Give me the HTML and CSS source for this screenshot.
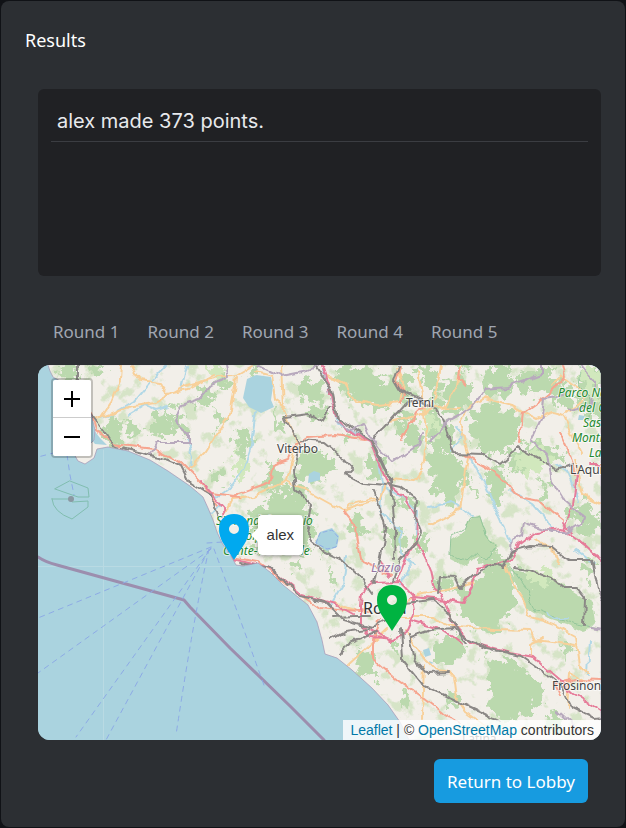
FILE: index.html
```html
<!DOCTYPE html>
<html lang="en">
<head>
<meta charset="utf-8">
<meta name="viewport" content="width=device-width, initial-scale=1">
<title>Results</title>
<link rel="stylesheet" href="styles.css">
</head>
<body>
<main class="card">
  <h1 class="title">Results</h1>
  <section class="content">
    <ul class="scores"><li class="score">alex made 373 points.</li></ul>
    <nav class="rounds" aria-label="Rounds">
      <a href="#round-1">Round 1</a><a href="#round-2">Round 2</a><a href="#round-3">Round 3</a><a href="#round-4">Round 4</a><a href="#round-5">Round 5</a>
    </nav>
    <div class="map">
      <svg class="tiles" viewBox="38 365 563 375" preserveAspectRatio="xMidYMid slice" aria-hidden="true">
        <defs>
          <filter id="rough" x="-5%" y="-5%" width="110%" height="110%" color-interpolation-filters="sRGB">
            <feTurbulence type="fractalNoise" baseFrequency="0.11" numOctaves="4" seed="4"/>
            <feDisplacementMap in="SourceGraphic" scale="26" xChannelSelector="R" yChannelSelector="G"/>
            <feGaussianBlur stdDeviation="0.5"/>
          </filter>
          <filter id="wobble" x="-5%" y="-5%" width="110%" height="110%" color-interpolation-filters="sRGB">
            <feTurbulence type="fractalNoise" baseFrequency="0.08" numOctaves="2" seed="9"/>
            <feDisplacementMap in="SourceGraphic" scale="8" xChannelSelector="R" yChannelSelector="G"/>
            <feGaussianBlur stdDeviation="0.3"/>
          </filter>
          <filter id="speckle" x="0" y="0" width="100%" height="100%" color-interpolation-filters="sRGB">
            <feTurbulence type="fractalNoise" baseFrequency="0.06" numOctaves="5" seed="12"/>
            <feColorMatrix values="0 0 0 0 .78  0 0 0 0 .87  0 0 0 0 .71  0 8 0 0 -4.5"/>
          </filter>
          <path id="land" d="M48 365L50 371 53 377 62 382 84 400 91 414 95 430 94 440 86 448 74 454 78 461 85 464 94 458 97 449 108 447 128 451 150 460 168 471 190 486 203 497 208 508 213 520 217 532 222 543 231 556 236 565 243 566 258 563 270 572 283 585 298 597 308 605 317 622 322 640 325 654 337 658 352 670 372 688 388 705 400 722 409 740H601V365Z"/>
          <clipPath id="on-land"><use href="#land"/></clipPath>
        </defs>
        <path class="sea" d="M38 365H601V740H38Z"/>
        <path class="tile-edge" d="M103.500 450V740M38 566.500H240"/>
        <use href="#land" class="land"/>
        <g clip-path="url(#on-land)">
          <rect x="38" y="365" width="563" height="375" filter="url(#speckle)" opacity=".65"/>
          <g class="wood" filter="url(#rough)">
            <path d="M53 370L76 368 82 378 60 382ZM91 366L104 367 103 375 92 374ZM103 422L120 419 124 435 120 447 104 440ZM127 423L144 426 141 437 128 436ZM151 416L165 411 174 428 169 439 151 434ZM166 408L184 412 189 437 175 430ZM197 389L208 386 216 392 210 405 197 406ZM215 377L226 374 231 386 218 391ZM214 470L223 469 224 480 216 483Z"/>
            <path d="M295 386L312 380 326 389 318 402 300 399ZM303 412L322 405 335 413 317 420ZM335 367L365 366 384 381 410 377 413 396 389 408 355 405 344 390ZM416 366L432 365 433 390 421 381ZM397 415L417 420 422 448 411 452 397 431ZM303 453L321 445 335 464 331 480 305 481 295 466ZM365 458L382 458 389 472 372 479ZM240 430L253 440 244 457 235 454ZM271 462L285 476 276 491 260 485ZM245 365L260 366 252 382Z"/>
            <path d="M431 372L439 366 440 409 431 420ZM444 386L464 374 472 386 467 409 446 411ZM485 366L515 366 510 392 487 398ZM472 411L491 402 521 416 518 437 501 453 487 455 466 433ZM430 409L451 425 452 453 429 453ZM431 452L462 456 465 483 453 508 430 489ZM486 466L502 469 508 491 493 505ZM508 449L529 452 528 474 509 473ZM514 378L532 368 550 369 549 389 530 399ZM548 379L563 377 565 397 549 405ZM525 440L556 450 569 460 550 460 529 451ZM580 366L603 366 603 421 587 421 579 398ZM556 390L572 382 574 414 561 403ZM571 507L585 501 602 521 594 538 572 524Z"/>
            <path d="M249 516L275 499 306 507 318 530 303 555 278 542 254 554ZM286 562L299 557 298 573ZM265 499L273 491 310 488 301 507ZM317 540L329 544 327 561ZM386 532L400 526 407 546 396 549ZM393 497L417 499 413 515ZM359 650L377 657 377 681 358 674ZM433 637L452 636 467 649 453 665 434 664ZM477 580L499 559 516 563 517 592 505 624 491 633 461 618 455 590ZM483 656L506 660 534 676 545 686 539 704 512 724 490 713 491 688ZM474 561L500 553 497 572ZM551 710L561 722 560 735 545 728ZM427 583L447 573 454 589 437 591ZM390 635L400 646 395 657Z"/>
            <path d="M355 510L366 520 362 535 350 528ZM418 530L430 540 425 556 415 548ZM455 360L470 362 460 374ZM470 480L480 490 474 500ZM540 480L552 490 545 500ZM580 560L596 566 590 585ZM215 410L226 418 218 430ZM330 570L340 578 332 592ZM560 640L575 648 565 656ZM400 690L412 700 404 712ZM446 690L458 700 450 712ZM275 410L285 425 277 436ZM340 430L352 436 345 446Z"/>
          </g>
          <g class="wood" filter="url(#wobble)">
            <path d="M479 515L485 533 496 547 486 559 477 556 466 566 450 558 451 540 465 531 468 520ZM513 570L524 572 552 577 592 603 595 621 585 632 565 624 543 617 527 608 518 590Z"/>
          </g>
          <g class="wood pale" filter="url(#rough)">
            <path d="M579 365H600V407L587 395ZM512 458L541 445 552 461 526 480ZM521 569L545 570 560 580 540 586ZM205 365L226 366 223 382 209 378ZM235 450L248 464 241 482ZM425 400L440 430 425 440Z"/>
          </g>
          <g class="park-line" filter="url(#wobble)">
            <path d="M479 517L485 535 494 547 486 559 477 552 466 562 450 553 451 536 465 529 470 518ZM512 568L524 585 536 610 568 622 597 628M579 365L581 388 591 398 589 418 601 424"/>
          </g>
          <g class="lake">
            <path d="M247 379L256 375 271 377 273 386 271 400 274 407 261 413 249 407 243 398Z"/>
            <path d="M315 543L320 532 332 528 339 536 337 547 327 551Z"/><path d="M309 474L314 471 320 473 320 480 308 483ZM423 650L429 648 431 655 425 657ZM90 425L100 438 107 445 95 444 90 438ZM429 661L434 663 430 664ZM579 415L585 416 583 420 578 420Z"/>
          </g>
          <g class="river" filter="url(#wobble)">
            <path d="M166 365L150 382 134 401 112 414 101 418M187 365L181 390M130 414L145 405 157 410 168 407M187 440L192 456 190 469M256 412L250 450 244 468 232 485 217 497M323 370L330 390 337 423 354 432 370 440 378 461 381 484 405 499 417 510 415 533M382 483L380 510 400 530 401 553 416 566M346 555L342 585 329 607M468 455L486 486 501 520 511 545M510 490L533 504 547 520 553 530M430 507L451 501 472 516M455 425L463 435 451 452M557 465L569 474 579 502M575 550L594 564M590 640L588 675M400 584L411 571 410 558M200 510L212 514 221 504M546 613L555 619 566 617"/>
          </g>
          <g class="road" filter="url(#wobble)">
            <path d="M92 421L128 407 155 403 185 386 218 377 236 376 253 366M121 365L120 380 111 403 101 418M131 366L139 380 160 383 168 394 187 390 214 375M237 378L232 410 205 453 190 469M256 371L272 375 275 400 286 408M282 365L284 410 296 443 287 480 255 496 232 498 225 512M326 374L345 384 355 400 377 405 400 402 403 384 397 366M440 365L435 398 426 415M461 365L457 386 446 407M421 416L435 408 460 407M460 423L470 407 485 398 512 406 536 419 552 412 563 415 573 436 582 453M461 425L468 458 460 510 430 525M552 386L560 375 581 390 582 402 566 414M575 458L582 495 602 505M425 413L407 418 390 422M418 371L427 428 423 470 415 482 387 480 380 497 350 505 345 511M287 480L343 511 375 501M505 565L516 590 525 603 529 616 554 625 576 637 580 665 589 673M400 617L433 617 454 627 493 629 531 630 536 640 575 645M394 610L416 595 451 589 475 584M388 628L348 665M405 630L425 660 435 670 453 674 456 697 466 712 485 725M424 665L422 718M531 656L531 644 544 638M568 707L570 674 583 681M535 540L552 549 560 565M333 603L355 610"/>
          </g>
          <g class="trunk" filter="url(#wobble)">
            <path d="M91 414L96 430 112 444 155 449 180 462 206 488 218 505M231 557L258 562 300 594 319 607 347 610 371 612M294 445L307 437 335 435 364 439M205 492L240 497M230 497L270 482 274 465 288 460 294 445M401 439L418 408 426 407M400 366L396 382 406 395M460 366L459 380 465 386M562 366L565 377 549 394 523 413 519 443M465 455L486 467 505 480 519 497 540 501 552 512 563 521M379 620L373 644 373 659 395 678 420 696 444 714 460 724M343 511L356 527 361 560 390 575M560 432L571 456 575 475M560 696L555 685 574 680 602 681M400 402L406 395"/>
          </g>
          <g class="motorway" filter="url(#wobble)">
            <path d="M322 365L330 388 335 414 347 430 370 440 380 467 387 483 406 499 417 518 416 540 426 560 430 570 434 588 442 595 454 625 470 642 510 653 533 657 556 677 574 693 602 711M200 480L213 495 224 507 225 535 233 559 269 568 303 595 335 604 353 614M361 606L362 592 375 582 400 581 412 594 415 612 407 630 395 639 371 637 361 624ZM411 597L447 600 462 603 474 582 477 569 495 564 510 561 518 545 536 532 562 529 601 557M577 474L573 505 564 530M381 560L389 577M563 523L570 532M590 464L602 464M411 621L442 630 460 642M391 640L370 630M416 542L406 557 397 580M580 540L602 561"/>
          </g>
          <g class="rail" filter="url(#wobble)">
            <path d="M78 365L78 382 90 414 106 435 113 446 160 457 181 466 189 482 212 496 219 520 229 555M316 365L331 389 337 417 357 431 371 440 378 453 391 482 393 502M371 440L384 428 408 402 420 399M284 417L309 414 321 422 330 407M284 416L299 446 294 470 296 490 311 504 306 535 323 551 342 560 363 580 373 594M300 440L324 442 340 455 352 468 346 474 363 483 385 485M387 484L400 487 417 500 415 515 421 530 417 542 400 560 393 580M371 440L391 484 395 530 394 560M418 401L439 412 447 430 454 454 484 455 500 464 519 448 526 453 545 464 558 471 573 465M404 603L434 600 450 615 460 635 487 648 520 656 551 678 561 686M240 563L270 568 301 596 324 601 343 620 371 628 385 620M333 617L355 616 372 616M401 628L403 660 424 686 500 721M409 634L413 657 428 674 450 673M399 365L394 380 400 390 422 400M340 655L350 643 376 633M561 685L572 707 594 718 602 717M331 639L344 632 368 629M375 583L386 530 379 504 374 490M438 594L440 576 456 577 461 588 475 575 494 564 504 567 511 551 530 546 551 547 562 556 570 560"/>
            <path d="M515 568L530 570 555 580 565 588 577 588 586 600 585 625M411 637L430 630 454 628 465 642M570 560L592 560 598 590 602 600"/>
          </g>
          <g class="border" filter="url(#wobble)">
            <path d="M226 365L229 378 211 386 199 399 181 405 175 421 188 433 188 443 157 443 151 454M258 365L282 376 307 371 319 365M335 420L349 429 365 424 371 437 380 450 393 462 418 445 422 433M541 365L541 375 507 387 485 389 472 408 450 420 430 440M563 395L544 398 542 417 531 440 547 456 552 480 564 500 585 518M511 550L512 540 522 536 524 522 552 532 565 532 585 519M557 710L579 730M581 365L594 381 592 405 570 410M590 627L602 629"/>
          </g>
        </g>
        <use href="#land" class="coast"/>
        <path class="sea-border" d="M38 557Q45 562 57 565L184 600 190 607 230 648 290 706 324 740"/>
        <g class="ferry"><path d="M211 547L38 618M211 549L38 673M211 548L76 737M209 550L106 740M209 549Q194 615 176 735M214 549Q235 605 265 688M207 543L223 542M65 450L38 457M67 455L70 475 74 495"/></g>
        <g class="reserve"><path d="M70 481L88 488 89 497H78L55 489ZM52 499H70L72 502 88 501V507L72 519Q53 512 52 499Z"/></g>
        <circle cx="71" cy="499" r="3" fill="#8b98a2"/>
        <path class="reserve lake-line" d="M316 543L320 533 332 530 338 537 336 547 327 549Z"/>
        <g class="town">
          <text x="277" y="453">Viterbo</text><text x="406" y="407">Terni</text><text x="570" y="474">L'Aquila</text><text x="552" y="690">Frosinone</text><text x="462" y="743">Latina</text>
          <text x="363" y="614" class="city">Roma</text>
        </g>
        <text class="region" x="371" y="572">Lazio</text>
        <g class="park">
          <text x="558" y="397">Parco Nazionale</text><text x="579" y="412">del Gran</text><text x="583" y="427">Sasso e</text><text x="572" y="442">Monti della</text><text x="589" y="457">Laga</text>
          <text x="216" y="525">Sic Fondali Tra Rio</text><text x="239" y="540">Volpe</text><text x="223" y="555">Conte-Guardiole</text>
        </g>
      </svg>
      <div class="zoom"><button type="button" aria-label="Zoom in"><svg viewBox="0 0 16 16"><path d="M8 0V16M0 8H16"/></svg></button><button type="button" aria-label="Zoom out"><svg viewBox="0 0 16 16"><path d="M0 8H16"/></svg></button></div>
      <svg class="pin guess" viewBox="0 0 30 46"><path fill-rule="evenodd" d="M15 0C6 0 0 6 0 15Q0 22 4 29L15 46 26 29Q30 22 30 15C30 6 24 0 15 0ZM15 10A5 5 0 1 1 15 20 5 5 0 1 1 15 10Z"/></svg>
      <svg class="pin goal" viewBox="0 0 30 46"><path fill-rule="evenodd" d="M15 0C6 0 0 6 0 15Q0 22 4 29L15 46 26 29Q30 22 30 15C30 6 24 0 15 0ZM15 10A5 5 0 1 1 15 20 5 5 0 1 1 15 10Z"/></svg>
      <div class="tooltip">alex</div>
      <div class="attribution"><a href="#leaflet">Leaflet</a> | © <a href="#osm">OpenStreetMap</a> contributors</div>
    </div>
    <div class="actions"><button type="button" class="return">Return to Lobby</button></div>
  </section>
</main>
</body>
</html>
```

FILE: styles.css
```css
* { box-sizing: border-box; }
body { margin: 0; padding: 1px; background: #101216; color: #fff; font-family: "Noto Sans", sans-serif; }
.card { min-height: calc(100vh - 2px); padding: 24px; border-radius: 8px; background: #2c2f33; }
.title { margin: 0; font-size: 18px; line-height: 30px; font-weight: 400; }
.content { padding: 34px 0 0 13px; }
.scores { list-style: none; min-height: 187px; margin: 0; padding: 13px; border-radius: 6px; background: #202124; }
.score { padding: 4px 6px; border-bottom: 1px solid #3b3d42; color: #e8eaed; font-family: Inter, sans-serif; font-size: 20px; line-height: 31px; }
.rounds { display: flex; gap: 28px; padding: 40px 15px 17px; }
.rounds a { color: #a0a6b1; font-size: 17px; line-height: 32px; text-decoration: none; }
.map { position: relative; aspect-ratio: 563 / 375; overflow: hidden; border-radius: 12px; background: #aad3df; color: #333; font-family: "Liberation Sans", sans-serif; }
.tiles { display: block; width: 100%; height: 100%; }
.tiles path { stroke-linejoin: round; stroke-linecap: round; }
.sea { fill: #aad3df; }
.land { fill: #f2efe9; }
.coast { fill: none; stroke: #a596b5; stroke-width: 1; opacity: .7; }
.tile-edge { fill: none; stroke: #b9dae3; }
.wood { fill: #bbd9ae; }
.pale { fill: #d1e8bd; }
.park-line { fill: none; stroke: #94c69b; }
.lake { fill: #aad3df; }
.river, .road, .trunk, .motorway, .rail, .border { fill: none; stroke-width: 2; }
.river { stroke: #b2d8e6; }
.road { stroke: #f8d09a; }
.trunk { stroke: #f6a58f; }
.motorway { stroke: #e67d9a; }
.rail { stroke: #8b8886; }
.border { stroke: #b8a9bd; }
.sea-border { fill: none; stroke: #9c8eae; stroke-width: 3; }
.ferry { fill: none; stroke: #8daae5; stroke-width: 1; stroke-dasharray: 5 5; }
.reserve { fill: none; stroke: #80bdaf; stroke-width: 1; }
.lake-line { stroke: #91aee4; stroke-dasharray: 4 3; }
.town, .region, .park { font-family: "Noto Sans", sans-serif; font-size: 12px; paint-order: stroke; stroke: #fff9; stroke-width: 2px; }
.town { fill: #444; }
.city { font-size: 16px; fill: #333; }
.region { fill: #9577a5; font-style: italic; font-size: 13px; }
.park { fill: #1f8a30; font-style: italic; }
.zoom { position: absolute; top: 13px; left: 13px; display: grid; border: 2px solid #0003; border-radius: 4px; background-clip: padding-box; overflow: hidden; }
.zoom button { display: grid; place-items: center; width: 38px; height: 38px; padding: 0; border: 0; background: #fff; }
.zoom button:first-child { border-bottom: 1px solid #ccc; }
.zoom svg { width: 16px; height: 16px; stroke: #000; stroke-width: 2; }
.pin { position: absolute; width: 30px; height: 46px; transform: translate(-50%, -100%); }
.guess { left: 34.8%; top: 52%; fill: #00a9ef; }
.goal { left: 62.8%; top: 70.8%; fill: #00b341; }
.tooltip { position: absolute; left: 39%; top: 40%; padding: 10px 9px; border-radius: 4px; background: #fff; box-shadow: 0 1px 4px #0006; font-size: 15px; line-height: 20px; }
.tooltip::before { content: ""; position: absolute; left: -7px; top: 13px; border: 7px solid transparent; border-left: 0; border-right-color: #fff; }
.attribution { position: absolute; right: 0; bottom: 0; padding: 0 7px; background: #fffc; font-size: 14px; line-height: 20px; }
.attribution a { color: #0078a8; text-decoration: none; }
.actions { display: flex; justify-content: flex-end; padding: 19px 13px 0; }
.return { min-height: 44px; padding: 2px 13px 0; border: 0; border-radius: 6px; background: #179be0; color: #fff; font: 17px/24px "Noto Sans", sans-serif; }
```
